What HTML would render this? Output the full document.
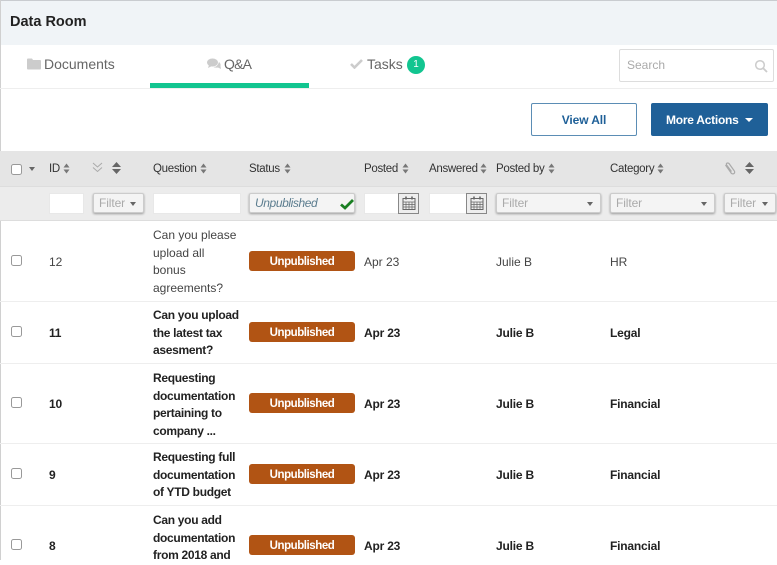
<!DOCTYPE html>
<html><head><meta charset="utf-8"><style>
html,body{margin:0;padding:0;background:#fff}
body{width:777px;height:560px;position:relative;overflow:hidden;font-family:"Liberation Sans",sans-serif;color:#333}
.a{position:absolute}
.t{position:absolute;white-space:nowrap}
.h{position:absolute;font-size:11.5px;letter-spacing:-.3px;color:#333;top:162px;line-height:14px;white-space:nowrap}
.s{position:absolute;width:7px;height:11px}
.cb{position:absolute;left:11px;width:9px;height:9px;border:1px solid #999;border-radius:2.5px;background:#fff}
.f{position:absolute;top:193px;height:20px;box-sizing:border-box;background:#f4f4f4;border:1px solid #ccc;border-radius:2px;box-shadow:0 1px 2px rgba(0,0,0,.35);font-size:12px;letter-spacing:-.1px;color:#aaa;line-height:18px;padding-left:5px;white-space:nowrap}
.i{position:absolute;top:193px;height:21px;background:#fff;box-sizing:border-box;border:1px solid #e8e8e8}
.car{position:absolute;width:0;height:0;border-left:3.5px solid transparent;border-right:3.5px solid transparent;border-top:4px solid #666}
.cal{position:absolute;top:193px;width:21px;height:21px;box-sizing:border-box;border:1px solid #888;background:#eee}
.b{position:absolute;left:249px;width:106px;height:20px;background:#b15414;border-radius:3px;color:#fff;font-size:11.5px;letter-spacing:-.45px;font-weight:bold;text-align:center;line-height:22px}
.q{position:absolute;left:153px;font-size:12px;line-height:17.5px;width:92px;white-space:nowrap}
.c{position:absolute;font-size:12px;line-height:16px;white-space:nowrap}
.bd{font-weight:bold;color:#222;letter-spacing:-.2px}
.q.bd{letter-spacing:-.3px}
.ln{position:absolute;left:0;width:777px;height:1px;background:#eee}
</style></head><body>
<div class="a" style="left:0;top:0;width:777px;height:45px;background:#f0f4f7;border-top:1px solid #c9ccd0;box-sizing:border-box"></div>
<div class="a" style="left:0;top:0;width:1px;height:560px;background:#d0d0d0"></div>
<div class="t" style="left:10px;top:13px;font-size:14.5px;font-weight:bold;color:#222;line-height:18px">Data Room</div>

<svg class="a" style="left:27px;top:58px" width="14" height="12" viewBox="0 0 14 12"><path d="M0 1.500 Q0 .5 1 .5H5L6 2H13Q14 2 14 3V10.500Q14 11.500 13 11.500H1Q0 11.500 0 10.500Z" fill="#ccc"/></svg>
<div class="t" style="left:44px;top:55px;font-size:14px;color:#666;line-height:18px">Documents</div>
<svg class="a" style="left:207px;top:58px" width="14" height="12" viewBox="0 0 14 12"><ellipse cx="5.500" cy="4.500" rx="5.500" ry="4" fill="#ccc"/><path d="M2 7L1 10L5 8Z" fill="#ccc"/><path d="M12 4Q14 5.500 13.500 8L14 11L11 9.500Q8 10 6.500 9Q10.500 9 12 4Z" fill="#ccc"/></svg>
<div class="t" style="left:224px;top:55px;font-size:14px;letter-spacing:-.8px;color:#666;line-height:18px">Q&amp;A</div>
<svg class="a" style="left:350px;top:58px" width="13" height="11" viewBox="0 0 13 11"><path d="M1 6L4.500 9.500L12 2" fill="none" stroke="#ccc" stroke-width="2.600"/></svg>
<div class="t" style="left:367px;top:55px;font-size:14px;color:#666;line-height:18px">Tasks</div>
<div class="a" style="left:407px;top:56px;width:18px;height:18px;border-radius:50%;background:#12c590;color:#fff;font-size:10px;text-align:center;line-height:18px">1</div>
<div class="a" style="left:150px;top:83px;width:159px;height:5px;background:#12c590"></div>
<div class="a" style="left:0;top:88px;width:777px;height:1px;background:#eee"></div>

<div class="a" style="left:619px;top:49px;width:155px;height:33px;box-sizing:border-box;border:1px solid #ddd;border-radius:2px;background:#fff"></div>
<div class="t" style="left:627px;top:58px;font-size:12px;color:#aaa;line-height:15px">Search</div>
<svg class="a" style="left:754px;top:59px" width="14" height="14" viewBox="0 0 14 14"><circle cx="6" cy="6" r="4.300" fill="none" stroke="#ccc" stroke-width="1.500"/><path d="M9.200 9.200L13 13" stroke="#ccc" stroke-width="1.800"/></svg>

<div class="a" style="left:531px;top:103px;width:106px;height:33px;box-sizing:border-box;border:1px solid #5b8db5;border-radius:2px;background:#fff;color:#1f6098;font-size:12px;letter-spacing:-.1px;font-weight:bold;text-align:center;line-height:32px">View All</div>
<div class="a" style="left:651px;top:103px;width:117px;height:33px;background:#1f6098;border-radius:2px;color:#fff;font-size:12px;letter-spacing:-.25px;font-weight:bold;line-height:34px;padding-left:15px;box-sizing:border-box">More Actions</div>
<div class="car" style="left:745px;top:118px;border-top-color:#fff;border-left-width:4px;border-right-width:4px"></div>

<div class="a" style="left:0;top:151px;width:777px;height:35px;background:#e5e5e5"></div>
<div class="a" style="left:0;top:186px;width:777px;height:35px;background:#ececec;border-top:1px solid #ddd;border-bottom:1px solid #ddd;box-sizing:border-box"></div>

<div class="cb" style="top:164px"></div>
<div class="car" style="left:29px;top:167px"></div>
<div class="h" style="left:49px">ID</div>
<svg class="s" style="left:63px;top:163px" viewBox="0 0 7 11"><path d="M3.500 .5L6.500 4.500H.5ZM3.500 10.500L.5 6.500H6.500Z" fill="#777"/></svg>
<svg class="a" style="left:92px;top:162px" width="11" height="11" viewBox="0 0 11 11"><path d="M1 1L5.500 5L10 1M1 5.500L5.500 9.500L10 5.500" fill="none" stroke="#aaa" stroke-width="1"/></svg>
<svg class="a" style="left:112px;top:162px" width="9" height="12" viewBox="0 0 9 12"><path d="M4.500 0L9 5H0ZM4.500 12L0 7H9Z" fill="#666"/></svg>
<div class="h" style="left:153px">Question</div>
<svg class="s" style="left:200px;top:163px" viewBox="0 0 7 11"><path d="M3.500 .5L6.500 4.500H.5ZM3.500 10.500L.5 6.500H6.500Z" fill="#777"/></svg>
<div class="h" style="left:249px">Status</div>
<svg class="s" style="left:284px;top:163px" viewBox="0 0 7 11"><path d="M3.500 .5L6.500 4.500H.5ZM3.500 10.500L.5 6.500H6.500Z" fill="#777"/></svg>
<div class="h" style="left:364px">Posted</div>
<svg class="s" style="left:402px;top:163px" viewBox="0 0 7 11"><path d="M3.500 .5L6.500 4.500H.5ZM3.500 10.500L.5 6.500H6.500Z" fill="#777"/></svg>
<div class="h" style="left:429px">Answered</div>
<svg class="s" style="left:480px;top:163px" viewBox="0 0 7 11"><path d="M3.500 .5L6.500 4.500H.5ZM3.500 10.500L.5 6.500H6.500Z" fill="#777"/></svg>
<div class="h" style="left:496px">Posted by</div>
<svg class="s" style="left:548px;top:163px" viewBox="0 0 7 11"><path d="M3.500 .5L6.500 4.500H.5ZM3.500 10.500L.5 6.500H6.500Z" fill="#777"/></svg>
<div class="h" style="left:610px">Category</div>
<svg class="s" style="left:657px;top:163px" viewBox="0 0 7 11"><path d="M3.500 .5L6.500 4.500H.5ZM3.500 10.500L.5 6.500H6.500Z" fill="#777"/></svg>
<svg class="a" style="left:724px;top:162px" width="12" height="13" viewBox="0 0 12 13"><path d="M1.500 3L7.500 11.500Q9.500 12.500 10.500 11Q11 9.500 10 8.500L5 1.500Q3.500 .5 2.500 1.500Q2 2.500 3 3.500L7.500 9.500" fill="none" stroke="#aaa" stroke-width="1.200"/></svg>
<svg class="a" style="left:745px;top:162px" width="9" height="12" viewBox="0 0 9 12"><path d="M4.500 0L9 5H0ZM4.500 12L0 7H9Z" fill="#666"/></svg>

<div class="i" style="left:49px;width:35px"></div>
<div class="f" style="left:93px;width:51px">Filter</div><div class="car" style="left:130px;top:202px"></div>
<div class="i" style="left:153px;width:88px"></div>
<div class="f" style="left:249px;width:106px;color:#5c7d8f;font-style:italic;font-size:12px;letter-spacing:-.4px">Unpublished</div>
<svg class="a" style="left:340px;top:198px" width="14" height="12" viewBox="0 0 14 12"><path d="M1 6.500L5 10L13 2" fill="none" stroke="#1a7f22" stroke-width="2.800"/></svg>
<div class="i" style="left:364px;width:35px"></div>
<div class="cal" style="left:398px"></div>
<svg class="a" style="left:402px;top:196px" width="14" height="15" viewBox="0 0 14 15"><rect x="1" y="2.500" width="12" height="11" fill="#eee" stroke="#666"/><path d="M1 6H13M1 8.500H13M1 11H13M4 6V13.500M7 6V13.500M10 6V13.500" stroke="#666" stroke-width=".7"/><path d="M4 .5V3.500M10 .5V3.500" stroke="#666" stroke-width="1.600"/></svg>
<div class="i" style="left:429px;width:38px"></div>
<div class="cal" style="left:466px"></div>
<svg class="a" style="left:470px;top:196px" width="14" height="15" viewBox="0 0 14 15"><rect x="1" y="2.500" width="12" height="11" fill="#eee" stroke="#666"/><path d="M1 6H13M1 8.500H13M1 11H13M4 6V13.500M7 6V13.500M10 6V13.500" stroke="#666" stroke-width=".7"/><path d="M4 .5V3.500M10 .5V3.500" stroke="#666" stroke-width="1.600"/></svg>
<div class="f" style="left:496px;width:105px">Filter</div><div class="car" style="left:587px;top:202px"></div>
<div class="f" style="left:610px;width:105px">Filter</div><div class="car" style="left:701px;top:202px"></div>
<div class="f" style="left:724px;width:52px">Filter</div><div class="car" style="left:762px;top:202px"></div>

<div class="cb" style="top:255px"></div>
<div class="c" style="left:49px;top:254px;color:#444">12</div>
<div class="q" style="top:227px;color:#444">Can you please<br>upload all<br>bonus<br>agreements?</div>
<div class="b" style="top:251px">Unpublished</div>
<div class="c" style="left:364px;top:254px;color:#444">Apr 23</div>
<div class="c" style="left:496px;top:254px;color:#444">Julie B</div>
<div class="c" style="left:610px;top:254px;color:#444">HR</div>
<div class="ln" style="top:301px"></div>

<div class="cb" style="top:326px"></div>
<div class="c bd" style="left:49px;top:325px">11</div>
<div class="q bd" style="top:307px">Can you upload<br>the latest tax<br>asesment?</div>
<div class="b" style="top:322px">Unpublished</div>
<div class="c bd" style="left:364px;top:325px">Apr 23</div>
<div class="c bd" style="left:496px;top:325px">Julie B</div>
<div class="c bd" style="left:610px;top:325px">Legal</div>
<div class="ln" style="top:363px"></div>

<div class="cb" style="top:397px"></div>
<div class="c bd" style="left:49px;top:396px">10</div>
<div class="q bd" style="top:370px">Requesting<br>documentation<br>pertaining to<br>company ...</div>
<div class="b" style="top:393px">Unpublished</div>
<div class="c bd" style="left:364px;top:396px">Apr 23</div>
<div class="c bd" style="left:496px;top:396px">Julie B</div>
<div class="c bd" style="left:610px;top:396px">Financial</div>
<div class="ln" style="top:443px"></div>

<div class="cb" style="top:468px"></div>
<div class="c bd" style="left:49px;top:467px">9</div>
<div class="q bd" style="top:449px">Requesting full<br>documentation<br>of YTD budget</div>
<div class="b" style="top:464px">Unpublished</div>
<div class="c bd" style="left:364px;top:467px">Apr 23</div>
<div class="c bd" style="left:496px;top:467px">Julie B</div>
<div class="c bd" style="left:610px;top:467px">Financial</div>
<div class="ln" style="top:505px"></div>

<div class="cb" style="top:539px"></div>
<div class="c bd" style="left:49px;top:538px">8</div>
<div class="q bd" style="top:512px">Can you add<br>documentation<br>from 2018 and</div>
<div class="b" style="top:535px">Unpublished</div>
<div class="c bd" style="left:364px;top:538px">Apr 23</div>
<div class="c bd" style="left:496px;top:538px">Julie B</div>
<div class="c bd" style="left:610px;top:538px">Financial</div>
</body></html>
